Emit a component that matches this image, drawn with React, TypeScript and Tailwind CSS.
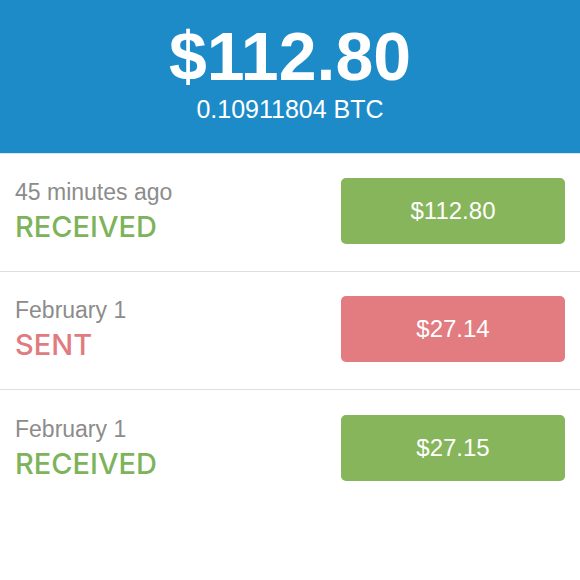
import React from "react";

type Tx = { when: string; kind: "RECEIVED" | "SENT"; amount: string };

const txs: Tx[] = [
  { when: "45 minutes ago", kind: "RECEIVED", amount: "$112.80" },
  { when: "February 1", kind: "SENT", amount: "$27.14" },
  { when: "February 1", kind: "RECEIVED", amount: "$27.15" },
];

export default function App() {
  return (
    <div className="w-[580px] h-[580px] bg-white font-['Liberation_Sans',Arial,sans-serif] overflow-hidden">
      <div className="h-[153px] bg-[#1e8bc9] flex flex-col items-center pt-[22px] text-white">
        <div className="text-[68px] leading-[68px] font-bold">$112.80</div>
        <div className="mt-[7px] text-[25px] leading-[25px]">0.10911804 BTC</div>
      </div>
      <div className="h-px bg-[#cfe6f4]" />
      {txs.map((tx, i) => {
        const sent = tx.kind === "SENT";
        return (
          <div
            key={i}
            className={`h-[118px] flex items-center justify-between px-[15px] pb-[3px] ${
              i < txs.length - 1 ? "border-b border-[#dedede]" : ""
            }`}
          >
            <div className="flex flex-col">
              <div className="text-[23px] leading-[26px] text-[#8c8c8c]">{tx.when}</div>
              <div
                className={`mt-[6px] font-['Inter',sans-serif] font-medium text-[29px] leading-[32px] ${
                  sent ? "text-[#e07b7f]" : "text-[#7db35a]"
                }`}
              >
                {tx.kind}
              </div>
            </div>
            <div
              className={`w-[224px] h-[66px] rounded-[5px] flex items-center justify-center text-white text-[24px] ${
                sent ? "bg-[#e27c80]" : "bg-[#86b55b]"
              }`}
            >
              {tx.amount}
            </div>
          </div>
        );
      })}
    </div>
  );
}
